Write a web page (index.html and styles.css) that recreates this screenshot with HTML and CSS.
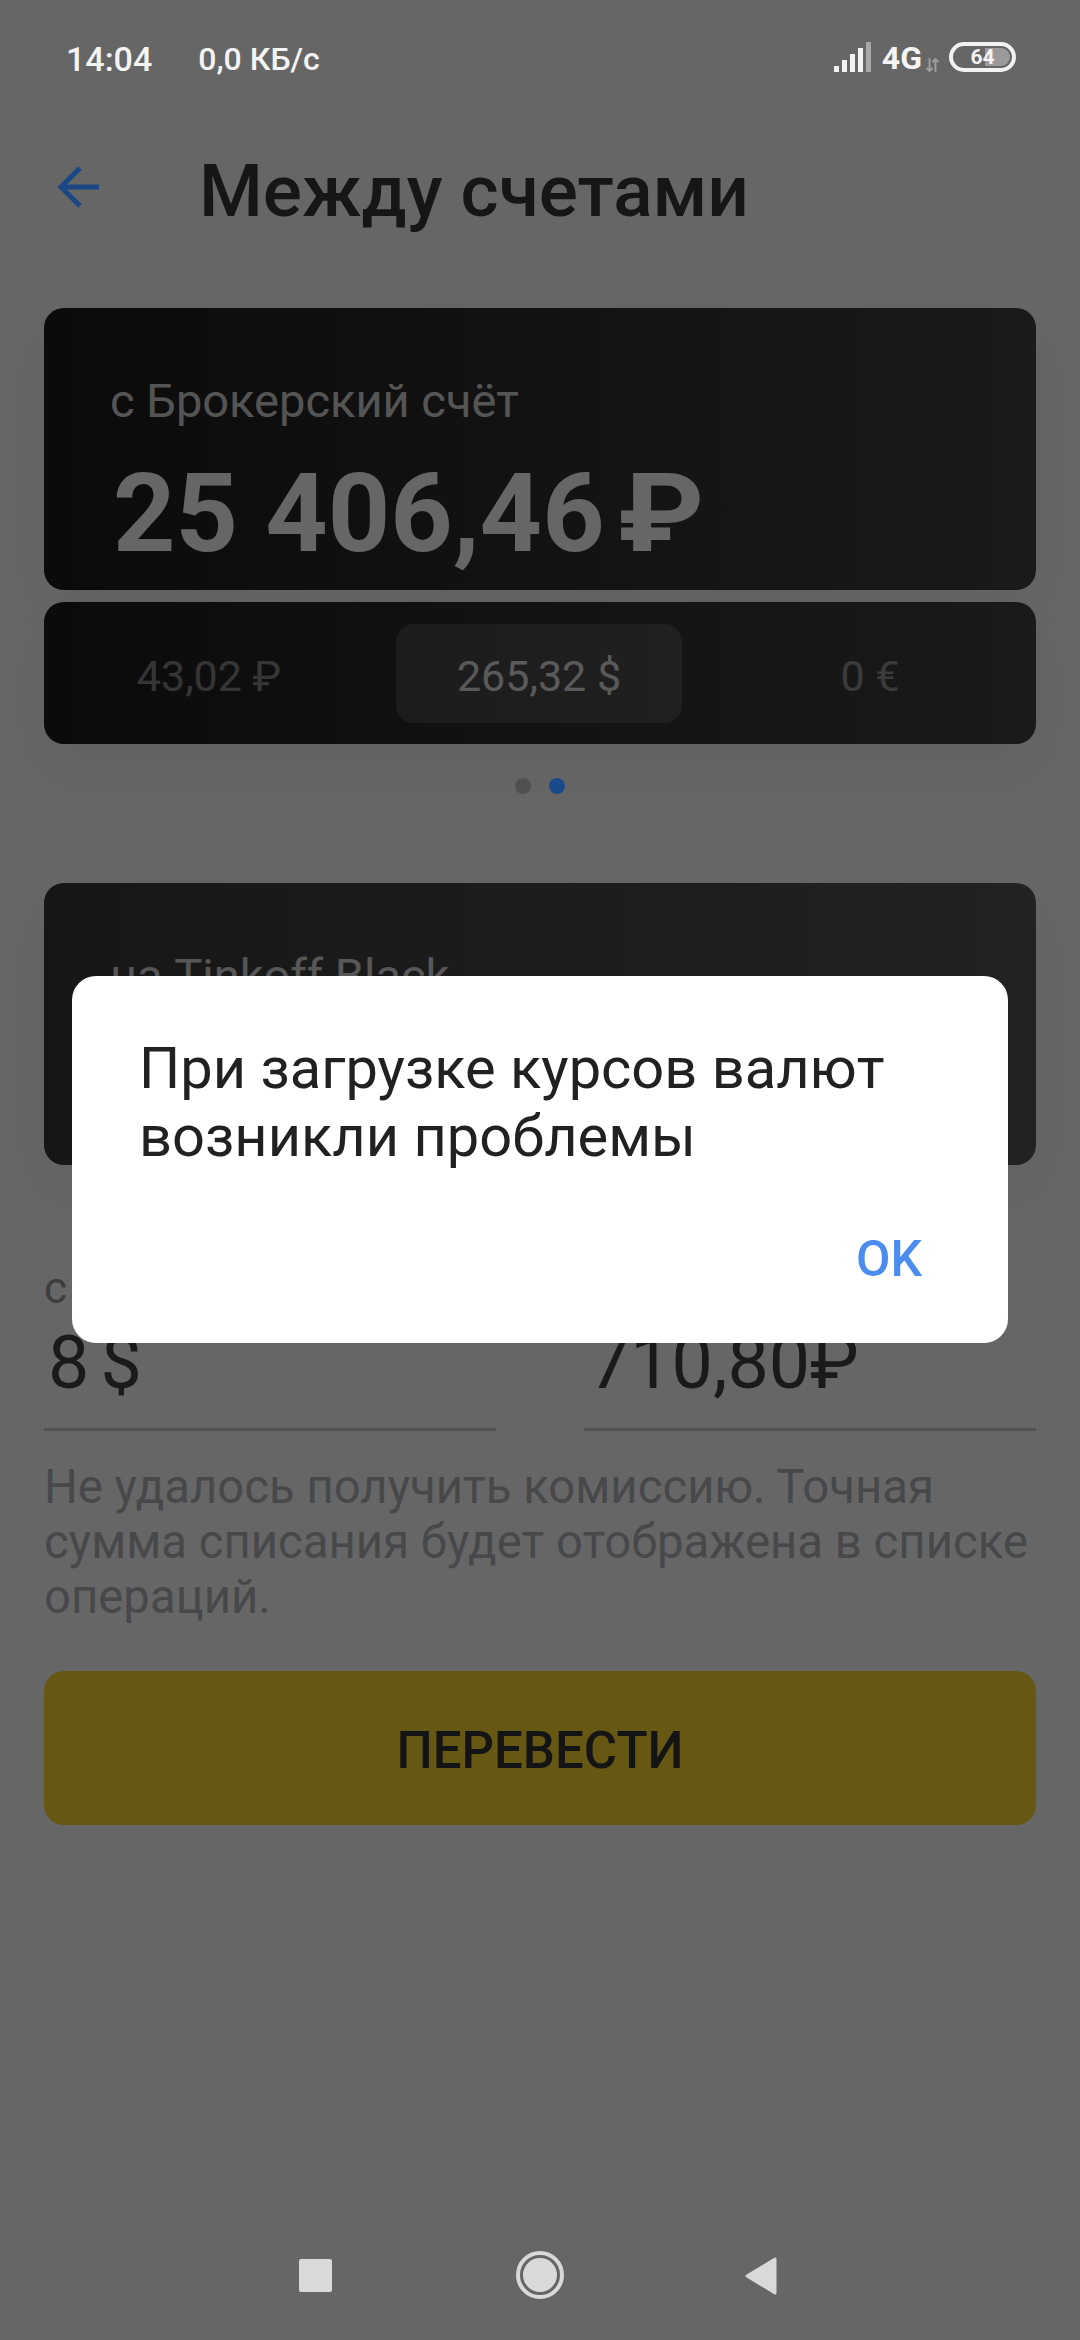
FILE: index.html
```html
<!DOCTYPE html>
<html lang="ru">
<head>
<meta charset="utf-8">
<title>Между счетами</title>
<link rel="stylesheet" href="styles.css">
</head>
<body>
<div class="page">
  <div class="status">
    <div class="status-left"><span class="time">14:04</span><span class="speed">0,0 КБ/с</span></div>
    <div class="status-right">
      <svg class="signal" width="40" height="30" viewBox="0 0 40 30"><rect x="0" y="24" width="5" height="6" fill="#f2f2f2"/><rect x="8" y="18" width="5" height="12" fill="#f2f2f2"/><rect x="16" y="12" width="5" height="18" fill="#f2f2f2"/><rect x="24" y="6" width="5" height="24" fill="#f2f2f2"/><rect x="32" y="0" width="5" height="30" fill="#a8a8a8"/></svg>
      <span class="net">4G</span>
      <svg class="updown" width="13" height="14" viewBox="0 0 13 14"><path d="M3.5 0v13M0.5 10l3 3 3-3M9.5 14V1M6.500 4l3-3 3 3" fill="none" stroke="#a0a0a0" stroke-width="1.800"/></svg>
      <div class="battery"><div class="battery-fill"></div><span class="battery-text">64</span></div>
    </div>
  </div>

  <header class="topbar">
    <svg class="back" width="46" height="46" viewBox="0 0 46 46"><path d="M44 23H6M25 4 6 23l19 19" fill="none" stroke="#1b4784" stroke-width="5"/></svg>
    <h1 class="title">Между счетами</h1>
  </header>

  <main class="content">
    <section class="card card-from">
      <div class="card-label">с Брокерский счёт</div>
      <div class="card-amount"><span>25 406,46</span><span class="currency">₽</span></div>
    </section>
    <div class="balances">
      <div class="balance">43,02 ₽</div>
      <div class="balance balance-active">265,32 $</div>
      <div class="balance">0 €</div>
    </div>
    <div class="dots"><span class="dot"></span><span class="dot dot-active"></span></div>
    <section class="card card-to">
      <div class="card-label">на Tinkoff Black</div>
    </section>
    <div class="fields">
      <div class="field"><div class="field-label">с</div><div class="field-value">8 $</div></div>
      <div class="field"><div class="field-label">&nbsp;</div><div class="field-value">710,80₽</div></div>
    </div>
    <p class="note">Не удалось получить комиссию. Точная сумма списания будет отображена в списке операций.</p>
    <button class="primary">ПЕРЕВЕСТИ</button>
  </main>

  <div class="scrim">
    <div class="dialog">
      <p class="dialog-text">При загрузке курсов валют возникли проблемы</p>
      <div class="dialog-actions"><span class="dialog-ok">OK</span></div>
    </div>
  </div>

  <nav class="navbar">
    <span class="nav-square"></span>
    <span class="nav-home"><span class="nav-home-inner"></span></span>
    <svg class="nav-back" width="32" height="38" viewBox="0 0 32 38"><path d="M30 2v34L2 19z" fill="#d9d9d9" stroke="#d9d9d9" stroke-width="3" stroke-linejoin="round"/></svg>
  </nav>
</div>
</body>
</html>
```
FILE: styles.css
```css
* { box-sizing: border-box; }
html, body { margin: 0; padding: 0; }
body { font-family: Roboto, "Noto Sans", sans-serif; background: #fff; }
.page { position: relative; width: 1080px; height: 2340px; display: flex; flex-direction: column; overflow: hidden; background: #fff; }

.status { position: relative; z-index: 2; height: 118px; flex: none; display: flex; justify-content: space-between; align-items: flex-start; padding: 42px 64px 0 66px; color: #f4f4f4; }
.status-left { display: flex; gap: 46px; font-size: 32px; font-weight: 500; line-height: 35px; }
.time { font-size: 34px; }
.status-right { display: flex; align-items: center; height: 30px; }
.net { font-size: 32px; font-weight: 700; line-height: 30px; margin: 2px 0 0 8px; }
.updown { align-self: flex-end; margin: 0 10px 0 4px; }
.battery { position: relative; width: 67px; height: 30px; border: 4px solid #f2f2f2; border-radius: 15px; display: flex; align-items: center; justify-content: center; overflow: hidden; }
.battery-fill { position: absolute; top: 2px; bottom: 2px; left: 32px; right: 2px; background: #9a9a9a; border-radius: 0 10px 10px 0; }
.battery-text { position: relative; font-size: 21px; font-weight: 700; line-height: 22px; }

.topbar { flex: none; height: 190px; display: flex; align-items: flex-start; padding-left: 55px; }
.back { position: relative; z-index: 2; margin-top: 46px; flex: none; }
.title { margin: 33px 0 0 98px; font-size: 73px; font-weight: 500; line-height: 80px; color: #373737; }

.content { flex: none; display: flex; flex-direction: column; padding: 0 44px; }
.card { height: 282px; border-radius: 20px; padding: 68px 66px 0; color: #fff; box-shadow: 0 24px 60px rgba(0,0,0,.05); }
.card-from { background: linear-gradient(90deg, #1c1c1c, #424244); }
.card-to { background: linear-gradient(90deg, #393939, #565656); }
.card-label { font-size: 47px; line-height: 50px; font-weight: 400; opacity: .8; }
.card-amount { font-size: 109px; line-height: 124px; font-weight: 700; margin: 26px 0 0 3px; white-space: nowrap; }
.currency { display: inline-block; margin-left: 13px; transform: scaleX(1.12); transform-origin: left center; }

.balances { margin-top: 12px; height: 142px; border-radius: 20px; background: linear-gradient(90deg, #1c1c1c, #424244); display: grid; grid-template-columns: 330px 286px 1fr; column-gap: 22px; align-items: center; color: #fff; font-size: 43px; box-shadow: 0 24px 60px rgba(0,0,0,.05); }
.balance { text-align: center; opacity: .45; padding-top: 5px; }
.balance-active { height: 99px; padding-top: 0; line-height: 104px; border-radius: 18px; background: rgba(255,255,255,.14); opacity: 1; color: #e0e0e0; }

.dots { height: 139px; display: flex; justify-content: center; align-items: flex-start; gap: 18px; padding-top: 34px; }
.dot { width: 16px; height: 16px; border-radius: 50%; background: #c8c8cc; }
.dot-active { position: relative; z-index: 2; background: #1b4a8c; }

.fields { display: grid; grid-template-columns: 452px 452px; justify-content: space-between; margin-top: 96px; height: 170px; }
.field { border-bottom: 3px solid #d0d0d0; height: 170px; padding-top: 5px; }
.field-label { font-size: 44px; line-height: 44px; color: #9a9a9a; }
.field-value { font-size: 73.500px; line-height: 84px; font-weight: 400; color: #414141; margin: 11px 0 0 4px; word-spacing: -7px; }
.field:last-child .field-value { margin-left: 5px; }
.note { margin: 29px 0 0; font-size: 47.300px; line-height: 55px; color: #b2b4ba; }
.primary { margin-top: 46px; height: 154px; width: 100%; border: 0; border-radius: 20px; padding: 5px 0 0; background: #ffdd2d; font-family: inherit; font-size: 51px; font-weight: 500; color: #333; }

.scrim { position: absolute; inset: 0; z-index: 1; background: rgba(0,0,0,.6); display: flex; justify-content: center; align-items: flex-start; padding-top: 976px; }
.dialog { width: 936px; height: 367px; background: #fff; border-radius: 24px; padding: 58px 66px 0 67px; display: flex; flex-direction: column; }
.dialog-text { margin: 0; font-size: 57.800px; line-height: 68px; color: #212121; }
.dialog-actions { margin: auto 20px 55px 0; display: flex; justify-content: flex-end; }
.dialog-ok { font-size: 50px; font-weight: 500; line-height: 58px; color: #4a8cf0; }

.navbar { position: absolute; z-index: 2; left: 0; right: 0; bottom: 0; height: 110px; }
.nav-square { position: absolute; left: 299px; top: 29px; width: 33px; height: 33px; background: #d9d9d9; border-radius: 2px; }
.nav-home { position: absolute; left: 516px; top: 21px; width: 48px; height: 48px; border: 4px solid #d9d9d9; border-radius: 50%; padding: 3px; }
.nav-home-inner { display: block; width: 100%; height: 100%; background: #d9d9d9; border-radius: 50%; }
.nav-back { position: absolute; left: 745px; top: 27px; }
```
